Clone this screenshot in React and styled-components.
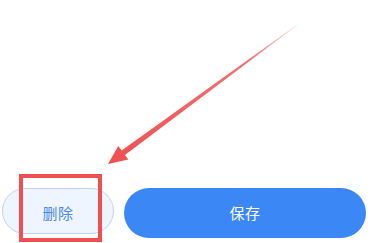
import React from "react";
import styled, { createGlobalStyle } from "styled-components";

const Global = createGlobalStyle`
  html, body { margin: 0; padding: 0; background: #ffffff; }
  body { font-family: "Noto Sans CJK SC", "Noto Sans", sans-serif; }
`;

const Page = styled.div`
  position: relative;
  width: 381px;
  height: 243px;
  overflow: hidden;
  background: #ffffff;
  display: flex;
  flex-direction: column;
  justify-content: flex-start;
  padding-top: 188px;
  box-sizing: border-box;
`;

const ButtonRow = styled.div`
  display: flex;
  align-items: flex-start;
  gap: 10px;
  padding-left: 2px;
`;

const PillButton = styled.button`
  box-sizing: border-box;
  width: ${(p) => p.$w}px;
  height: ${(p) => p.$h}px;
  border-radius: 999px;
  border: ${(p) => (p.$primary ? "none" : "1px solid #b9d3f4")};
  background: ${(p) => (p.$primary ? "#3b87f6" : "#eef5fe")};
  color: ${(p) => (p.$primary ? "#ffffff" : "#4a89ee")};
  font-family: "Noto Sans CJK SC", "Noto Sans", sans-serif;
  font-size: 15px;
  display: flex;
  align-items: center;
  justify-content: center;
  padding: ${(p) => (p.$primary ? "0 0 1px" : "3px 0 0")};
  letter-spacing: 0.5px;
`;

const Highlight = styled.div`
  position: absolute;
  left: 19px;
  top: 174px;
  width: 83px;
  height: 68px;
  box-sizing: border-box;
  border: 4px solid #f04f50;
  pointer-events: none;
`;

const Overlay = styled.svg`
  position: absolute;
  left: 0;
  top: 0;
  pointer-events: none;
`;

function Arrow() {
  const tail = [297, 25];
  const tip = [108, 164];
  const dx = tip[0] - tail[0];
  const dy = tip[1] - tail[1];
  const len = Math.hypot(dx, dy);
  const u = [dx / len, dy / len];
  const n = [-u[1], u[0]];
  const headLen = 19;
  const headHalf = 8.5;
  const base = [tip[0] - headLen * u[0], tip[1] - headLen * u[1]];
  const p = (c, k, v) => [c[0] + k * v[0], c[1] + k * v[1]];
  const pts = [
    p(tail, 0.3, n),
    p(base, 2.8, n),
    p(base, headHalf, n),
    tip,
    p(base, -headHalf, n),
    p(base, -2.8, n),
    p(tail, -0.3, n),
  ]
    .map((q) => q.join(","))
    .join(" ");
  return (
    <Overlay width="381" height="243" viewBox="0 0 381 243">
      <defs>
        <linearGradient id="fade" x1={tail[0]} y1={tail[1]} x2={tip[0]} y2={tip[1]} gradientUnits="userSpaceOnUse">
          <stop offset="0" stopColor="#f04f50" stopOpacity="0.15" />
          <stop offset="0.25" stopColor="#f04f50" stopOpacity="0.8" />
          <stop offset="1" stopColor="#f04f50" stopOpacity="1" />
        </linearGradient>
      </defs>
      <polygon points={pts} fill="url(#fade)" />
    </Overlay>
  );
}

export default function App() {
  return (
    <>
      <Global />
      <Page>
        <ButtonRow>
          <PillButton $w={112} $h={46}>删除</PillButton>
          <PillButton $primary $w={242} $h={50}>保存</PillButton>
        </ButtonRow>
        <Arrow />
        <Highlight />
      </Page>
    </>
  );
}
